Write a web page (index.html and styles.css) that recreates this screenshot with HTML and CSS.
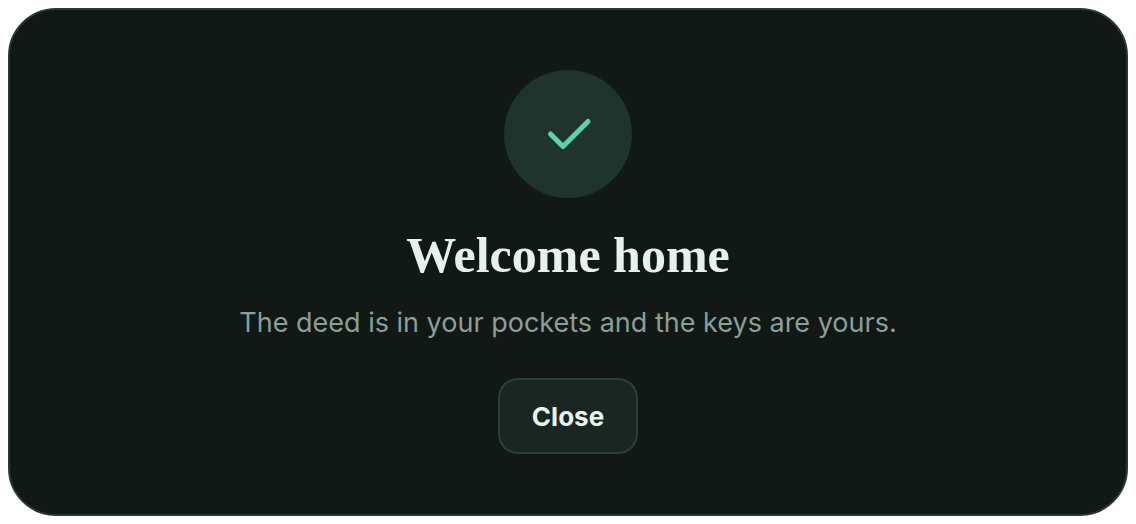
FILE: index.html
```html
<!DOCTYPE html>
<html lang="en">
<head>
<meta charset="utf-8">
<meta name="viewport" content="width=device-width, initial-scale=1">
<title>Welcome home</title>
<link rel="stylesheet" href="styles.css">
</head>
<body>
<main class="card">
  <div class="badge">
    <svg class="check" viewBox="0 0 24 24" aria-hidden="true"><path d="M5 12l5 5L20 7"/></svg>
  </div>
  <h1 class="title">Welcome home</h1>
  <p class="message">The deed is in your pockets and the keys are yours.</p>
  <button class="close" type="button">Close</button>
</main>
</body>
</html>
```

FILE: styles.css
```css
* {
  box-sizing: border-box;
}

body {
  margin: 0;
  padding: 8px;
  background: #fff;
  font-family: Inter, "Liberation Sans", sans-serif;
}

.card {
  display: flex;
  flex-direction: column;
  align-items: center;
  padding: 60px 24px;
  border: 2px solid #2a3733;
  border-radius: 48px;
  background: #111815;
}

.badge {
  display: grid;
  place-items: center;
  width: 128px;
  height: 128px;
  border-radius: 50%;
  background: #1e342c;
}

.check {
  width: 60px;
  height: 60px;
  fill: none;
  stroke: #5fd3a8;
  stroke-width: 2;
  stroke-linecap: round;
  stroke-linejoin: round;
}

.title {
  margin: 32px 0 0;
  color: #e8f0ed;
  font-family: "Liberation Serif", serif;
  font-size: 50px;
  font-weight: 700;
  line-height: 50px;
  text-align: center;
}

.message {
  margin: 23px 0 0;
  color: #8a9f97;
  font-size: 27px;
  line-height: 40px;
  text-align: center;
}

.close {
  margin-top: 35px;
  padding: 17px 32px 15px;
  border: 2px solid #2f3d39;
  border-radius: 20px;
  background: #192622;
  color: #e8f3ee;
  font-family: inherit;
  font-size: 26px;
  font-weight: 700;
  line-height: 40px;
}
```
